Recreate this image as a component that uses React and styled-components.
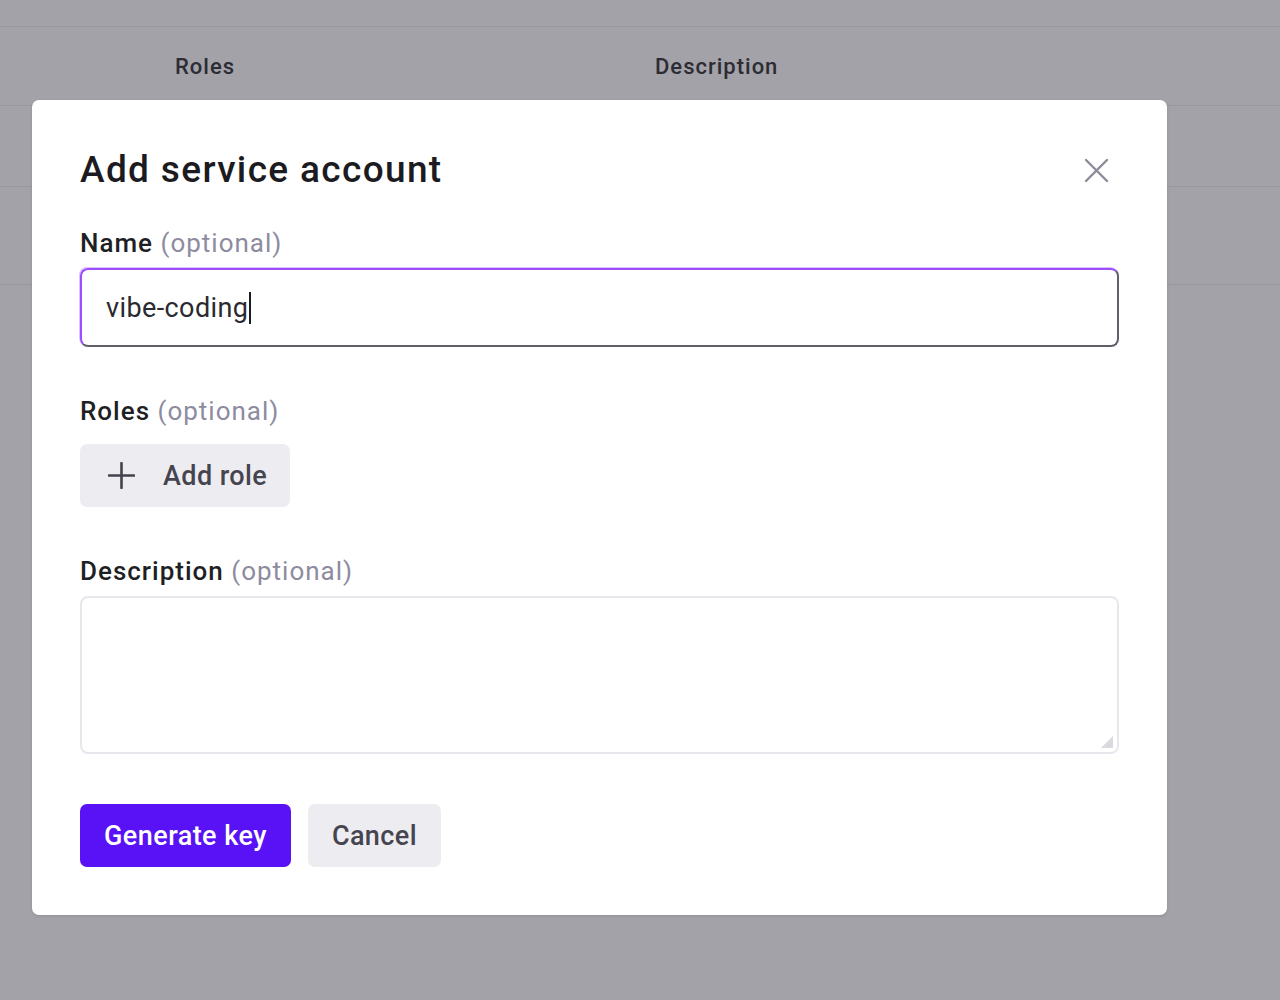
import React from "react";
import styled, { createGlobalStyle } from "styled-components";

const Global = createGlobalStyle`
  html, body { margin: 0; padding: 0; }
  body {
    width: 1280px;
    height: 1000px;
    overflow: hidden;
    background: #a3a2a8;
    font-family: Roboto, "Liberation Sans", Arial, sans-serif;
  }
  * { box-sizing: border-box; }
`;

const Page = styled.div`
  position: relative;
  width: 1280px;
  height: 1000px;
  background: #a3a2a8;
`;

const Table = styled.div`
  padding-top: 26px;
  display: flex;
  flex-direction: column;
`;

const Row = styled.div`
  display: grid;
  grid-template-columns: 175px 480px 1fr;
  align-items: center;
  height: ${(p) => p.$h}px;
  border-top: 1px solid #98979e;
`;

const HeadCell = styled.div`
  font-size: 22px;
  font-weight: 500;
  letter-spacing: 1px;
  color: #2d2c34;
`;

const Modal = styled.div`
  position: absolute;
  left: 32px;
  top: 100px;
  width: 1135px;
  background: #ffffff;
  border-radius: 7px;
  padding: 48px;
  display: flex;
  flex-direction: column;
  box-shadow: 0 1px 3px rgba(0, 0, 0, 0.12);
`;

const Header = styled.div`
  display: flex;
  align-items: center;
  justify-content: space-between;
  height: 44px;
`;

const Title = styled.h2`
  margin: 0;
  font-size: 37px;
  font-weight: 500;
  color: #1b1b21;
  letter-spacing: 1.35px;
  line-height: 44px;
`;

const CloseButton = styled.button`
  border: 0;
  background: transparent;
  padding: 0;
  margin-right: 10px;
  width: 25px;
  height: 25px;
  display: flex;
  align-items: center;
  justify-content: center;
  cursor: pointer;
`;

const Label = styled.div`
  margin-top: ${(p) => p.$mt}px;
  font-size: 26px;
  line-height: 32px;
  font-weight: 500;
  letter-spacing: 1px;
  color: #1f1f26;
`;

const Optional = styled.span`
  font-weight: 400;
  color: #8d8b9f;
`;

const Input = styled.div`
  margin-top: 9px;
  height: 79px;
  border: 2px solid;
  border-color: #9b4dff #606068 #606068 #9b4dff;
  border-radius: 8px;
  padding: 0 24px;
  display: flex;
  align-items: center;
  font-size: 27px;
  letter-spacing: 0.4px;
  color: #2a2a30;
  box-shadow: -1px -1px 0 rgba(155, 77, 255, 0.35);
`;

const Caret = styled.span`
  display: inline-block;
  width: 2px;
  height: 32px;
  background: #1b1b21;
  margin-left: 1px;
`;

const GhostButton = styled.button`
  margin-top: ${(p) => p.$mt || 0}px;
  align-self: flex-start;
  height: 63px;
  border: 0;
  border-radius: 7px;
  background: #ededf1;
  color: #46454f;
  font-family: inherit;
  font-size: 27px;
  font-weight: 500;
  letter-spacing: 0.4px;
  padding: ${(p) => (p.$icon ? "0 23px 0 28px" : "0 24px")};
  display: flex;
  align-items: center;
  gap: 28px;
  cursor: pointer;
`;

const TextArea = styled.div`
  position: relative;
  margin-top: 9px;
  height: 158px;
  border: 2px solid #e7e7ed;
  border-radius: 8px;
`;

const Grip = styled.svg`
  position: absolute;
  right: 4px;
  bottom: 4px;
`;

const Actions = styled.div`
  margin-top: 50px;
  display: flex;
  gap: 17px;
`;

const PrimaryButton = styled.button`
  height: 63px;
  border: 0;
  border-radius: 7px;
  background: #5912f6;
  color: #ffffff;
  font-family: inherit;
  font-size: 27px;
  font-weight: 500;
  letter-spacing: 0.45px;
  padding: 0 24px;
  cursor: pointer;
`;

const Plus = () => (
  <svg width="27" height="27" viewBox="0 0 27 27">
    <path d="M13.5 1v25M1 13.5h25" stroke="#44434d" strokeWidth="2.6" strokeLinecap="round" />
  </svg>
);

const XIcon = () => (
  <svg width="25" height="25" viewBox="0 0 25 25">
    <path d="M2 2l21 21M23 2L2 23" stroke="#8c8b97" strokeWidth="2.4" strokeLinecap="round" />
  </svg>
);

export default function App() {
  return (
    <>
      <Global />
      <Page>
        <Table>
          <Row $h={79}>
            <span />
            <HeadCell>Roles</HeadCell>
            <HeadCell>Description</HeadCell>
          </Row>
          <Row $h={81} />
          <Row $h={98} />
          <Row $h={1} />
        </Table>
        <Modal>
          <Header>
            <Title>Add service account</Title>
            <CloseButton aria-label="Close">
              <XIcon />
            </CloseButton>
          </Header>
          <Label $mt={35}>
            Name <Optional>(optional)</Optional>
          </Label>
          <Input>
            vibe-coding
            <Caret />
          </Input>
          <Label $mt={48}>
            Roles <Optional>(optional)</Optional>
          </Label>
          <GhostButton $mt={17} $icon>
            <Plus />
            Add role
          </GhostButton>
          <Label $mt={48}>
            Description <Optional>(optional)</Optional>
          </Label>
          <TextArea>
            <Grip width="12" height="12" viewBox="0 0 12 12">
              <path d="M12 0L12 12L0 12Z" fill="#d9d9df" />
            </Grip>
          </TextArea>
          <Actions>
            <PrimaryButton>Generate key</PrimaryButton>
            <GhostButton>Cancel</GhostButton>
          </Actions>
        </Modal>
      </Page>
    </>
  );
}
